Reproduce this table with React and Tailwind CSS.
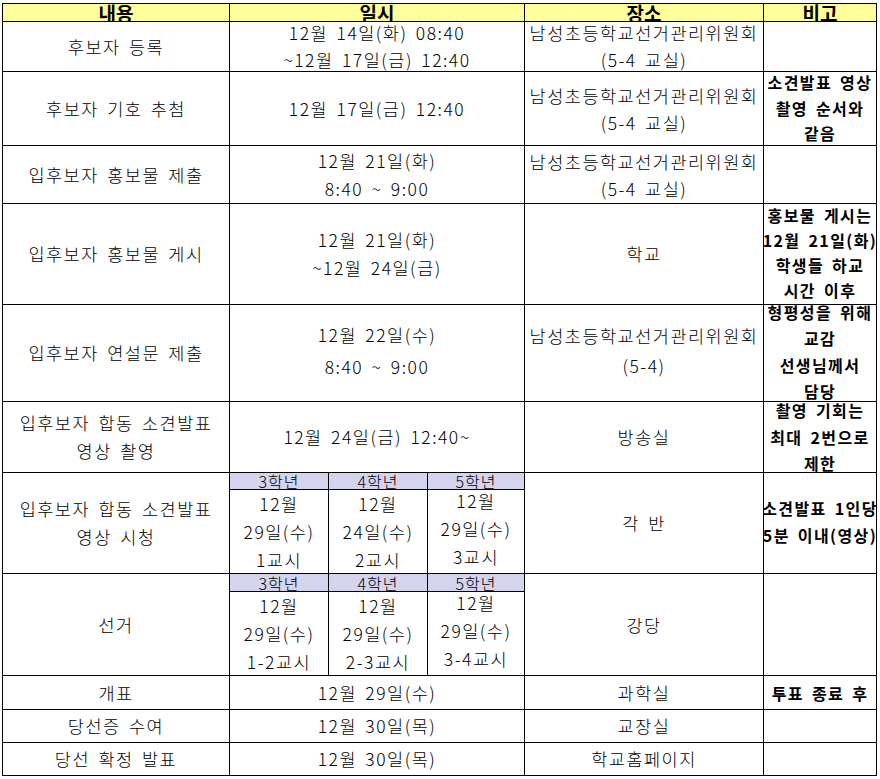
import React from 'react';

const Cell = ({ lines = [], lead = 'leading-[28px]', bold = false, extra = '' }) => {
  return (
    <div
      className={`flex flex-col items-center justify-center overflow-hidden bg-white ${
        bold ? 'font-bold text-[16px] tracking-[1.4px]' : 'font-light text-[17.5px] tracking-[1.5px]'
      } ${lead} ${extra}`}
    >
      {lines.map((t, i) => (
        <div key={i} className="whitespace-nowrap">
          {t}
        </div>
      ))}
    </div>
  );
};

const Head = ({ children }) => (
  <div className="flex items-center justify-center overflow-hidden bg-[#ffff99] text-[19px] font-bold leading-[17px]">
    {children}
  </div>
);

const Grade = ({ children }) => (
  <div className="flex items-center justify-center overflow-hidden bg-[#d4d4ee] text-[16px] font-light leading-[16px] tracking-[1px]">
    {children}
  </div>
);

const GradeTable = ({ headRow, items }) => (
  <div className={`grid grid-cols-[98px_98px_96px] ${headRow} gap-px bg-black`}>
    <Grade>3학년</Grade>
    <Grade>4학년</Grade>
    <Grade>5학년</Grade>
    {items.map((it, i) => (
      <Cell key={i} lines={it} extra={i === 2 ? 'pb-[5px]' : ''} />
    ))}
  </div>
);

export default function App() {
  return (
    <div className="min-h-screen bg-white pt-[3px] pl-[2px] text-black font-['Noto_Sans_CJK_KR',sans-serif] [word-spacing:3px]">
      <div className="grid w-[875px] grid-cols-[226px_294px_238px_112px] grid-rows-[17px_49px_73px_57px_100px_96px_70px_100px_101px_33px_32px_32px] gap-px bg-black p-px">
        <Head>내용</Head>
        <Head>일시</Head>
        <Head>장소</Head>
        <Head>비고</Head>

        <Cell lines={['후보자 등록']} />
        <Cell lines={['12월 14일(화) 08:40', '~12월 17일(금) 12:40']} lead="leading-[27px]" extra="pb-[2px]" />
        <Cell lines={['남성초등학교선거관리위원회', '(5-4 교실)']} lead="leading-[27px]" extra="pb-[2px]" />
        <Cell />

        <Cell lines={['후보자 기호 추첨']} />
        <Cell lines={['12월 17일(금) 12:40']} />
        <Cell lines={['남성초등학교선거관리위원회', '(5-4 교실)']} lead="leading-[27px]" />
        <Cell bold lines={['소견발표 영상', '촬영 순서와', '같음']} lead="leading-[25.5px]" />

        <Cell lines={['입후보자 홍보물 제출']} />
        <Cell lines={['12월 21일(화)', '8:40 ~ 9:00']} />
        <Cell lines={['남성초등학교선거관리위원회', '(5-4 교실)']} lead="leading-[27px]" />
        <Cell />

        <Cell lines={['입후보자 홍보물 게시']} />
        <Cell lines={['12월 21일(화)', '~12월 24일(금)']} />
        <Cell lines={['학교']} />
        <Cell bold lines={['홍보물 게시는', '12월 21일(화)', '학생들 하교', '시간 이후']} lead="leading-[25px]" extra="pb-[3px]" />

        <Cell lines={['입후보자 연설문 제출']} />
        <Cell lines={['12월 22일(수)', '8:40 ~ 9:00']} lead="leading-[32px]" extra="pb-[5px]" />
        <Cell lines={['남성초등학교선거관리위원회', '(5-4)']} lead="leading-[30px]" extra="pb-[5px]" />
        <Cell bold lines={['형평성을 위해', '교감', '선생님께서', '담당']} lead="leading-[26.5px]" extra="pb-[3px]" />

        <Cell lines={['입후보자 합동 소견발표', '영상 촬영']} />
        <Cell lines={['12월 24일(금) 12:40~']} />
        <Cell lines={['방송실']} />
        <Cell bold lines={['촬영 기회는', '최대 2번으로', '제한']} lead="leading-[26.5px]" />

        <Cell lines={['입후보자 합동 소견발표', '영상 시청']} />
        <GradeTable
          headRow="grid-rows-[16px_83px]"
          items={[
            ['12월', '29일(수)', '1교시'],
            ['12월', '24일(수)', '2교시'],
            ['12월', '29일(수)', '3교시'],
          ]}
        />
        <Cell lines={['각 반']} />
        <Cell bold lines={['소견발표 1인당', '5분 이내(영상)']} lead="leading-[27px]" extra="pb-[2px]" />

        <Cell lines={['선거']} />
        <GradeTable
          headRow="grid-rows-[17px_83px]"
          items={[
            ['12월', '29일(수)', '1-2교시'],
            ['12월', '29일(수)', '2-3교시'],
            ['12월', '29일(수)', '3-4교시'],
          ]}
        />
        <Cell lines={['강당']} />
        <Cell />

        <Cell lines={['개표']} lead="leading-[20px]" />
        <Cell lines={['12월 29일(수)']} lead="leading-[20px]" />
        <Cell lines={['과학실']} lead="leading-[20px]" />
        <Cell bold lines={['투표 종료 후']} lead="leading-[20px]" />

        <Cell lines={['당선증 수여']} lead="leading-[20px]" />
        <Cell lines={['12월 30일(목)']} lead="leading-[20px]" />
        <Cell lines={['교장실']} lead="leading-[20px]" />
        <Cell />

        <Cell lines={['당선 확정 발표']} lead="leading-[20px]" />
        <Cell lines={['12월 30일(목)']} lead="leading-[20px]" />
        <Cell lines={['학교홈페이지']} lead="leading-[20px]" />
        <Cell />
      </div>
    </div>
  );
}
